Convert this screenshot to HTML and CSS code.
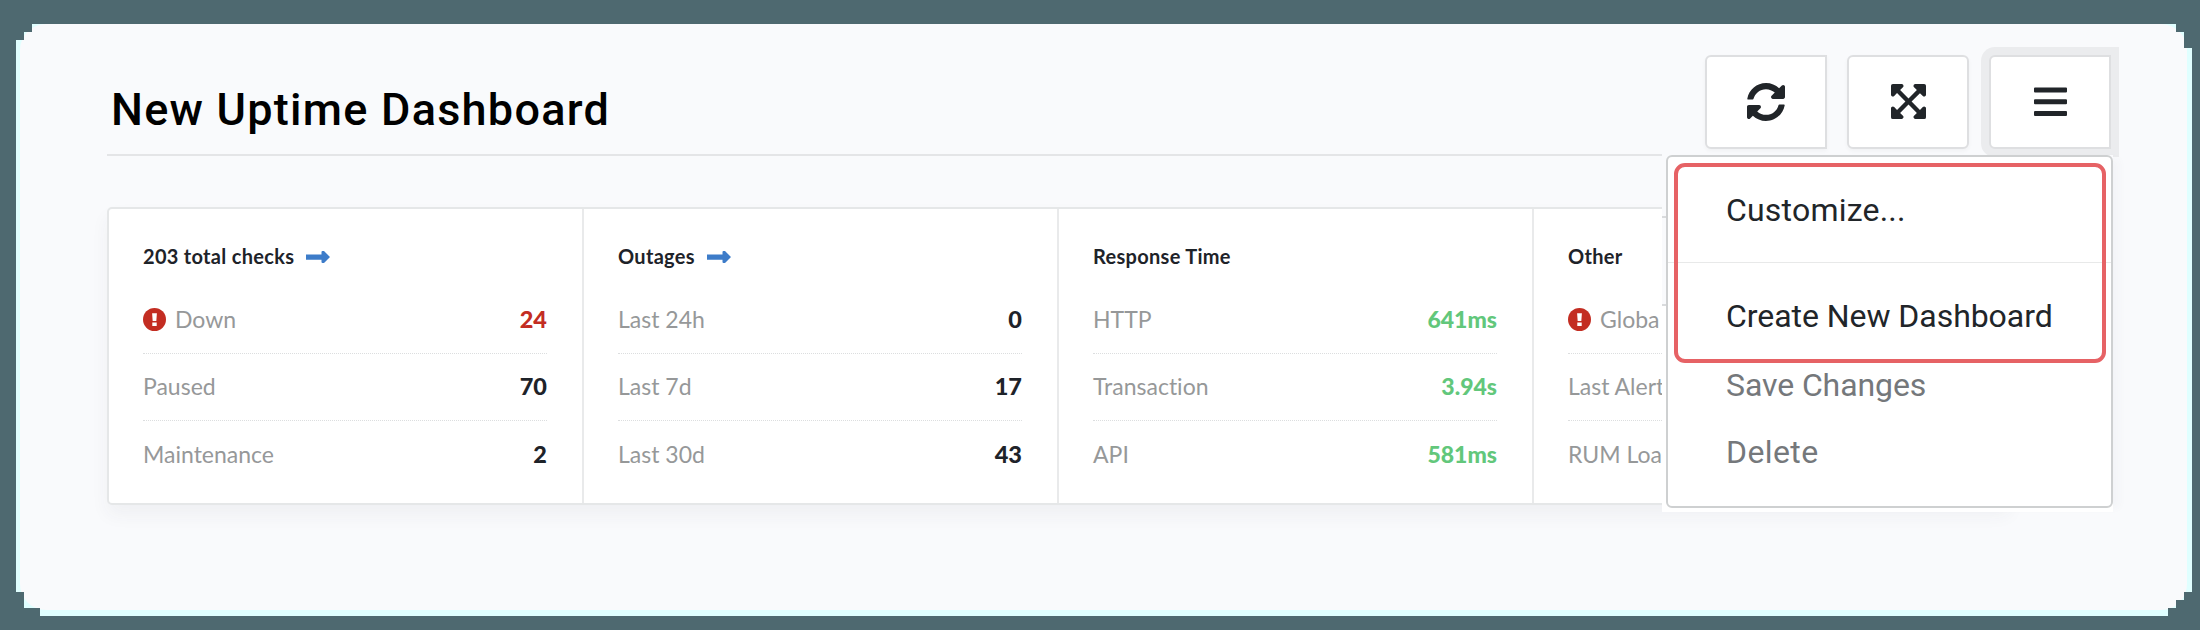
FILE: index.html
```html
<!DOCTYPE html>
<html lang="en">
<head>
<meta charset="utf-8">
<title>New Uptime Dashboard</title>
<link rel="stylesheet" href="styles.css">
</head>
<body>
<div class="frame">
<main class="panel">
  <header class="header">
    <h1 class="title">New Uptime Dashboard</h1>
    <div class="toolbar">
      <button class="tool tool-square" aria-label="Refresh"><svg class="icon-sync" viewBox="8 8 496 496"><path d="M370.72 133.28C339.458 104.008 298.888 87.962 255.848 88c-77.458.068-144.328 53.178-162.791 126.85-1.344 5.363-6.122 9.15-11.651 9.15H24.103c-7.498 0-13.194-6.807-11.807-14.176C33.933 94.924 134.813 8 256 8c66.448 0 126.791 26.136 171.315 68.685L463.03 40.97C478.149 25.851 504 36.559 504 57.941V192c0 13.255-10.745 24-24 24H345.941c-21.382 0-32.09-25.851-16.971-40.971l41.75-41.749zM32 296h134.059c21.382 0 32.09 25.851 16.971 40.971l-41.75 41.75c31.262 29.273 71.835 45.319 114.876 45.28 77.418-.07 144.315-53.144 162.787-126.849 1.344-5.363 6.122-9.15 11.651-9.15h57.304c7.498 0 13.194 6.807 11.807 14.176C478.067 417.076 377.187 504 256 504c-66.448 0-126.791-26.136-171.315-68.685L48.97 471.03C33.851 486.149 8 475.441 8 454.059V320c0-13.255 10.745-24 24-24z"/></svg></button>
      <button class="tool" aria-label="Expand"><svg class="icon-expand" viewBox="0 32 448 448"><path d="M448 344v112a23.94 23.94 0 0 1-24 24H312c-21.39 0-32.09-25.9-17-41l36.2-36.2L224 295.6 116.77 402.9 153 439c15.09 15.1 4.39 41-17 41H24a23.94 23.94 0 0 1-24-24V344c0-21.4 25.89-32.1 41-17l36.19 36.2L184.46 256 77.18 148.7 41 185c-15.1 15.1-41 4.4-41-17V56a23.94 23.94 0 0 1 24-24h112c21.39 0 32.09 25.9 17 41l-36.2 36.2L224 216.4l107.23-107.3L295 73c-15.09-15.1-4.39-41 17-41h112a23.94 23.94 0 0 1 24 24v112c0 21.4-25.89 32.1-41 17l-36.19-36.2L263.54 256l107.28 107.3L407 327.1c15.1-15.2 41-4.5 41 16.9z"/></svg></button>
      <button class="tool tool-square tool-active" aria-label="Menu"><svg class="icon-bars" viewBox="0 0 33 30"><path d="M1 .5h31a1 1 0 0 1 1 1v3a1 1 0 0 1-1 1H1a1 1 0 0 1-1-1v-3a1 1 0 0 1 1-1zM1 12.3h31a1 1 0 0 1 1 1v3a1 1 0 0 1-1 1H1a1 1 0 0 1-1-1v-3a1 1 0 0 1 1-1zM1 24h31a1 1 0 0 1 1 1v3a1 1 0 0 1-1 1H1a1 1 0 0 1-1-1v-3a1 1 0 0 1 1-1z"/></svg></button>
    </div>
  </header>

  <section class="card">
    <div class="col">
      <h2 class="col-title"><span>203 total checks</span><svg class="arrow" viewBox="0 0 24 12"><path d="M0 3.400h15.500V1Q15.500 0 16.500 0H18L24 6 18 12H16.500Q15.500 12 15.500 11V8.700H0z"/></svg></h2>
      <div class="row"><span class="label"><svg class="alert" viewBox="0 0 24 24"><circle cx="12" cy="12" r="12"/><path d="M9.500 5.500h5l-.6 8h-3.800zM9.700 15.200h4.600v3.500H9.700z"/></svg><span>Down</span></span><b class="bad">24</b></div>
      <div class="row"><span class="label">Paused</span><b>70</b></div>
      <div class="row"><span class="label">Maintenance</span><b>2</b></div>
    </div>
    <div class="col">
      <h2 class="col-title"><span>Outages</span><svg class="arrow" viewBox="0 0 24 12"><path d="M0 3.400h15.500V1Q15.500 0 16.500 0H18L24 6 18 12H16.500Q15.500 12 15.500 11V8.700H0z"/></svg></h2>
      <div class="row"><span class="label">Last 24h</span><b>0</b></div>
      <div class="row"><span class="label">Last 7d</span><b>17</b></div>
      <div class="row"><span class="label">Last 30d</span><b>43</b></div>
    </div>
    <div class="col">
      <h2 class="col-title"><span>Response Time</span></h2>
      <div class="row"><span class="label">HTTP</span><b class="good">641ms</b></div>
      <div class="row"><span class="label">Transaction</span><b class="good">3.94s</b></div>
      <div class="row"><span class="label">API</span><b class="good">581ms</b></div>
    </div>
    <div class="col">
      <h2 class="col-title"><span>Other</span></h2>
      <div class="row"><span class="label"><svg class="alert" viewBox="0 0 24 24"><circle cx="12" cy="12" r="12"/><path d="M9.500 5.500h5l-.6 8h-3.800zM9.700 15.200h4.600v3.500H9.700z"/></svg><span>Globa</span></span></div>
      <div class="row"><span class="label">Last Alert</span></div>
      <div class="row"><span class="label">RUM Load</span></div>
    </div>
  </section>

  <div class="menu-layer">
    <nav class="menu">
      <div class="highlight">
        <a class="item item-first">Customize...</a>
        <a class="item item-create">Create New Dashboard</a>
      </div>
      <a class="item muted item-save">Save Changes</a>
      <a class="item muted item-delete">Delete</a>
    </nav>
  </div>
</main>
</div>
</body>
</html>
```

FILE: styles.css
```css
* { box-sizing: border-box; }
body {
  margin: 0;
  width: 2200px;
  height: 630px;
  overflow: hidden;
  background: #4e6970;
  font-family: Lato, sans-serif;
  font-variant-ligatures: none;
}
.frame {
  width: 2200px;
  height: 630px;
  padding: 24px 13px 20px 20px;
  background: #e0ffff;
  clip-path: polygon(32px 24px, 2176px 24px, 2176px 32px, 2184px 32px, 2184px 48px, 2192px 48px, 2192px 592px, 2184px 592px, 2184px 600px, 2176px 600px, 2176px 608px, 2168px 608px, 2168px 616px, 40px 616px, 40px 608px, 24px 608px, 24px 592px, 16px 592px, 16px 40px, 24px 40px, 24px 32px, 32px 32px);
}
.panel {
  height: 586px;
  padding: 31px 76px 0 87px;
  border-radius: 26px;
  background: #f9fafc;
}
.header {
  display: flex;
  justify-content: space-between;
  height: 101px;
  background: linear-gradient(#e4e5e7, #e4e5e7) 0 99px / 1555px 2px no-repeat;
}
.title {
  margin: 0;
  padding: 28px 0 0 4px;
  font: 500 45px/54px Roboto, sans-serif;
  letter-spacing: 1.25px;
  color: #000;
}
.toolbar { display: flex; gap: 20px; }
.tool {
  display: flex;
  align-items: center;
  justify-content: center;
  width: 122px;
  height: 94px;
  padding: 0 0 1px;
  border: 2px solid #dedfe1;
  border-radius: 6px;
  background: #fff;
  box-shadow: 0 2px 4px rgba(0, 0, 0, .04);
}
.tool-square { border-radius: 6px 0 0 6px; }
.tool-active { box-shadow: 0 0 0 8px #ebecee; }
.tool svg { fill: #212529; }
.icon-sync { width: 38px; height: 38px; }
.icon-expand { width: 35px; height: 35px; }
.icon-bars { width: 33px; height: 30px; }

.card {
  display: grid;
  grid-template-columns: repeat(4, 475px);
  width: 1903px;
  height: 298px;
  margin-top: 51px;
  border: 2px solid #e5e7e8;
  border-radius: 5px;
  background: #fff;
  box-shadow: 0 10px 18px rgba(60, 65, 80, .05);
}
.col { padding: 32px 35px 0 34px; border-right: 2px solid #e9eaeb; }
.col:last-child { border-right: 0; }
.col-title {
  display: flex;
  align-items: center;
  height: 30px;
  margin: 0 0 16px;
  font-size: 20px;
  font-weight: 700;
  letter-spacing: .3px;
  color: #1e2329;
}
.arrow { width: 24px; height: 12px; margin: 1px 0 0 12px; fill: #3d7cc9; }
.row {
  display: flex;
  align-items: center;
  justify-content: space-between;
  height: 67px;
  padding-bottom: 2px;
  border-bottom: 1px dotted #dcdedf;
  font-size: 23px;
  color: #969899;
}
.row:last-child { border-bottom: 0; }
.row b { font-size: 23.500px; font-weight: 900; color: #1e2329; }
.row .bad { color: #c32d22; }
.row .good { font-size: 23px; color: #62c77b; }
.label { display: flex; align-items: center; gap: 9px; }
.alert { width: 23px; height: 23px; fill: #c32d22; }
.alert path { fill: #fff; }

.menu-layer {
  position: absolute;
  left: 1662px;
  top: 155px;
  width: 451px;
  height: 357px;
  padding-left: 4px;
  background:
    linear-gradient(#d9dbdd, #d9dbdd) 0 61px / 100% 2px no-repeat,
    linear-gradient(#d9dbdd, #d9dbdd) 0 149px / 6px 2px no-repeat,
    linear-gradient(#f9fafc 150px, #fff 150px);
  box-shadow: 10px 0 8px -4px rgba(60, 65, 80, .03);
}
.menu {
  width: 447px;
  height: 353px;
  padding: 6px 5px 0 6px;
  border: 2px solid #ced0d1;
  border-radius: 6px;
  background: linear-gradient(#e8e9e9, #e8e9e9) 0 105px / 100% 1px no-repeat #fff;
}
.highlight {
  height: 200px;
  border: 4px solid #e66265;
  border-radius: 11px;
}
.item {
  display: block;
  height: 40px;
  font: 400 32px/40px Roboto, sans-serif;
  color: #212529;
  white-space: nowrap;
}
.highlight .item { padding-left: 48px; }
.item-first { margin-top: 23px; letter-spacing: .2px; }
.item-create { margin-top: 66px; letter-spacing: -.05px; }
.item.muted { padding-left: 52px; color: #75787b; }
.item-save { margin-top: 2px; letter-spacing: -.1px; }
.item-delete { margin-top: 27px; letter-spacing: .4px; }
```
